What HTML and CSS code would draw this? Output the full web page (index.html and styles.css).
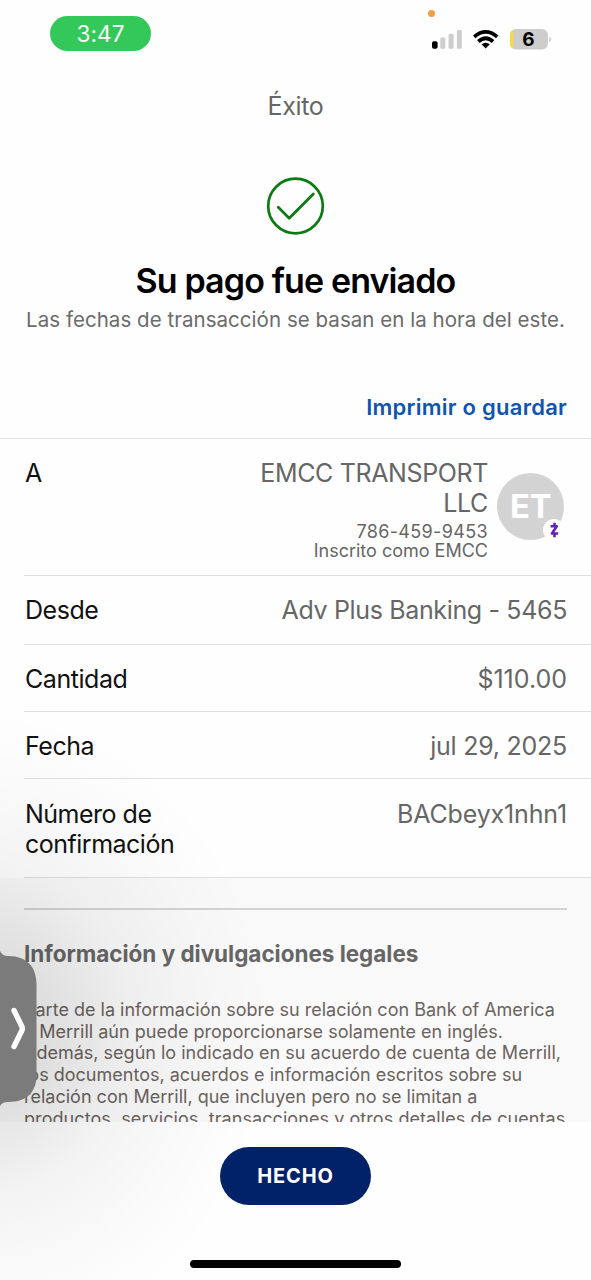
FILE: index.html
```html
<!DOCTYPE html>
<html lang="es">
<head>
<meta charset="utf-8">
<title>Éxito</title>
<link rel="stylesheet" href="styles.css">
</head>
<body>
<div class="screen">
  <header class="status">
    <span class="time">3:47</span>
    <i class="mic-dot"></i>
    <svg class="status-icons" width="122" height="24" viewBox="430 27 122 24">
      <rect x="432" y="41.2" width="5.6" height="7.6" rx="1.8" fill="#000"/>
      <g fill="#cdcdcd">
        <rect x="440.3" y="37.5" width="5" height="11.3" rx="1.5"/>
        <rect x="448.6" y="33.8" width="5" height="15" rx="1.5"/>
        <rect x="456.9" y="30" width="5" height="18.8" rx="1.5"/>
        <path d="M549.3 36.8c2.6.8 2.6 4.600 0 5.400z"/>
      </g>
      <g fill="none" stroke="#000" stroke-width="3.700">
        <path d="M474.200 36.800Q485.700 27 497.200 36.800"/>
        <path d="M478.300 41.500Q485.700 35 493.100 41.500"/>
      </g>
      <path d="M481.600 44.300Q485.700 41 489.800 44.300L485.700 48.600z"/>
      <clipPath id="cell"><rect x="510" y="29" width="38" height="20.500" rx="6"/></clipPath>
      <g clip-path="url(#cell)"><path d="M510 29h38v21h-38z" fill="#cdcdcd"/><path d="M509 29h4v21h-4z" fill="#fbdc2c"/></g>
      <text x="528.500" y="46" text-anchor="middle" class="charge">6</text>
    </svg>
  </header>
  <h1 class="nav-title">Éxito</h1>
  <section class="hero">
    <svg class="check" width="60" height="60" viewBox="0 0 60 60" fill="none" stroke="#0c7a12" stroke-width="2.700" stroke-linecap="round" stroke-linejoin="round">
      <circle cx="29.500" cy="30" r="27.300"/><path d="M12.300 31.300L23.200 42.200L47.300 18"/>
    </svg>
    <h2 class="headline">Su pago fue enviado</h2>
    <p class="note">Las fechas de transacción se basan en la hora del este.</p>
  </section>
  <a class="print">Imprimir o guardar</a>
  <main class="details">
    <div class="row payee">
      <span class="label">A</span>
      <div class="recipient">
        <div class="who">
          <span class="name">EMCC TRANSPORT<br>LLC</span>
          <span class="sub phone">786-459-9453</span>
          <span class="sub enrolled">Inscrito como EMCC</span>
        </div>
        <div class="avatar"><span>ET</span>
          <svg class="badge" width="22" height="22" viewBox="0 0 22 22"><circle cx="11" cy="11" r="11" fill="#fff"/><path d="M7.600 7.300H13.800L8.900 14.500H15.200M11.500 3.800V7M11.500 15V18.300" fill="none" stroke="#5f24b4" stroke-width="2.600" stroke-linejoin="round"/></svg>
        </div>
      </div>
    </div>
    <div class="row from"><span class="label l-from">Desde</span><span class="value v-from">Adv Plus Banking - 5465</span></div>
    <div class="row amount"><span class="label l-amount">Cantidad</span><span class="value v-amount">$110.00</span></div>
    <div class="row date"><span class="label">Fecha</span><span class="value v-date">jul 29, 2025</span></div>
    <div class="row confirm"><span class="label l-confirm">Número de<br>confirmación</span><span class="value v-confirm">BACbeyx1nhn1</span></div>
  </main>
  <section class="legal">
    <h3>Información y divulgaciones legales</h3>
    <p><span class="p1">Parte de la información sobre su relación con Bank of America</span><span class="p2">y Merrill aún puede proporcionarse solamente en inglés.</span><span class="p3">Además, según lo indicado en su acuerdo de cuenta de Merrill,</span><span class="p4">los documentos, acuerdos e información escritos sobre su</span><span class="p5">relación con Merrill, que incluyen pero no se limitan a</span><span class="p6">productos, servicios, transacciones y otros detalles de cuentas</span></p>
  </section>
  <footer class="footer">
    <button class="done">HECHO</button>
    <i class="home"></i>
  </footer>
  <div class="shade"></div>
  <svg class="tab" width="40" height="160" viewBox="0 950 40 160">
    <path d="M0 951Q2 956 8 956C28 956 36.500 968 36.500 984V1075C36.500 1091 28 1102 8 1102Q2 1102 0 1106z" fill="#7b7b7b"/>
    <path d="M14 1010.500L21.900 1026.500Q22.700 1028.500 21.900 1030.500L14 1046.500" fill="none" stroke="#fff" stroke-width="5.400" stroke-linecap="round" stroke-linejoin="round"/>
  </svg>
</div>
</body>
</html>
```
FILE: styles.css
```css
* { box-sizing: border-box; margin: 0; padding: 0; }
body { background: #fff; font-family: Inter, "Liberation Sans", sans-serif; }
.screen { position: relative; width: 591px; height: 1280px; overflow: hidden; background: #fefefe; color: #111; display: flex; flex-direction: column; }
.status { position: relative; height: 86px; flex: none; display: flex; justify-content: space-between; align-items: flex-start; padding: 16px 39px 0 50px; }
.time { width: 101px; height: 35px; border-radius: 18px; background: #34c759; color: #fff; font-size: 22.500px; line-height: 36px; text-align: center; letter-spacing: 0.100px; }
.status-icons { margin-top: 11px; }
.charge { font-size: 19px; font-weight: 700; }
.mic-dot { position: absolute; left: 428px; top: 10px; width: 7px; height: 7px; border-radius: 50%; background: #f0a03c; }
.nav-title { height: 40px; flex: none; font-size: 25px; font-weight: 400; line-height: 40px; color: #666; text-align: center; letter-spacing: -0.350px; }
.hero { height: 254px; flex: none; display: flex; flex-direction: column; align-items: center; padding-top: 50px; }
.headline { margin-top: 24px; font-size: 34px; line-height: 42px; font-weight: 600; color: #000; letter-spacing: -0.870px; white-space: nowrap; }
.note { margin-top: 2px; font-size: 20.500px; line-height: 32px; color: #6b6b6b; letter-spacing: 0.040px; white-space: nowrap; }
.print { height: 58px; flex: none; padding: 10px 24px 0 0; text-align: right; font-size: 22px; line-height: 34px; font-weight: 600; color: #0f55ae; letter-spacing: 0.250px; }
.details { flex: none; border-top: 1px solid #e4e4e4; }
.row { margin-left: 24px; padding: 0 24px 0 1px; border-bottom: 1px solid #dfdfdf; display: flex; justify-content: space-between; font-size: 25px; line-height: 30px; white-space: nowrap; }
.label { letter-spacing: -0.450px; }
.value, .who { color: #666; }
.payee { height: 137px; padding-top: 19px; padding-right: 27px; }
.recipient { display: flex; gap: 9px; }
.who { display: flex; flex-direction: column; align-items: flex-end; text-align: right; }
.name { letter-spacing: -0.370px; }
.sub { font-size: 18px; line-height: 19px; }
.phone { margin-top: 4px; letter-spacing: 0.350px; }
.avatar { position: relative; width: 67px; height: 67px; margin-top: 15px; border-radius: 50%; background: #d3d3d3; color: #fff; font-size: 33px; font-weight: 700; line-height: 67px; text-align: center; letter-spacing: -0.500px; }
.badge { position: absolute; left: 46px; top: 46px; }
.from { height: 69px; padding-top: 19px; }
.amount { height: 67px; padding-top: 19px; }
.date { height: 67px; padding-top: 19px; }
.confirm { height: 99px; padding-top: 20px; }
.l-confirm { letter-spacing: -0.500px; }
.v-from { letter-spacing: -0.350px; }
.v-date { letter-spacing: -0.250px; }
.v-confirm { letter-spacing: -0.150px; }
.legal { height: 244px; flex: none; overflow: hidden; background: #f9f9f9; padding: 30px 24px 0; }
.legal h3 { border-top: 2px solid #d3d3d3; padding-top: 30px; font-size: 22.500px; line-height: 28px; font-weight: 700; letter-spacing: -0.030px; color: #666; white-space: nowrap; }
.legal p { margin-top: 31px; font-size: 18px; line-height: 21.700px; letter-spacing: 0.005px; color: #6b635d; white-space: nowrap; }
.legal p span { display: block; width: max-content; }
.legal .p6 { letter-spacing: 0.070px; }
.footer { flex: 1; display: flex; flex-direction: column; align-items: center; padding-top: 25px; }
.done { width: 151px; height: 58px; border: 0; border-radius: 29px; background: #012169; color: #fff; font: 700 20px/58px Inter, sans-serif; letter-spacing: 0.900px; }
.home { width: 211px; height: 8px; margin-top: 55px; border-radius: 4px; background: #000; }
.shade { position: absolute; left: 0; top: 700px; width: 320px; height: 580px; background: radial-gradient(ellipse 290px 320px at -20px 330px, rgba(0,0,0,.13), rgba(0,0,0,.1) 26%, rgba(0,0,0,.045) 52%, rgba(0,0,0,.015) 78%, transparent); }
.tab { position: absolute; left: 0; top: 950px; }
```
